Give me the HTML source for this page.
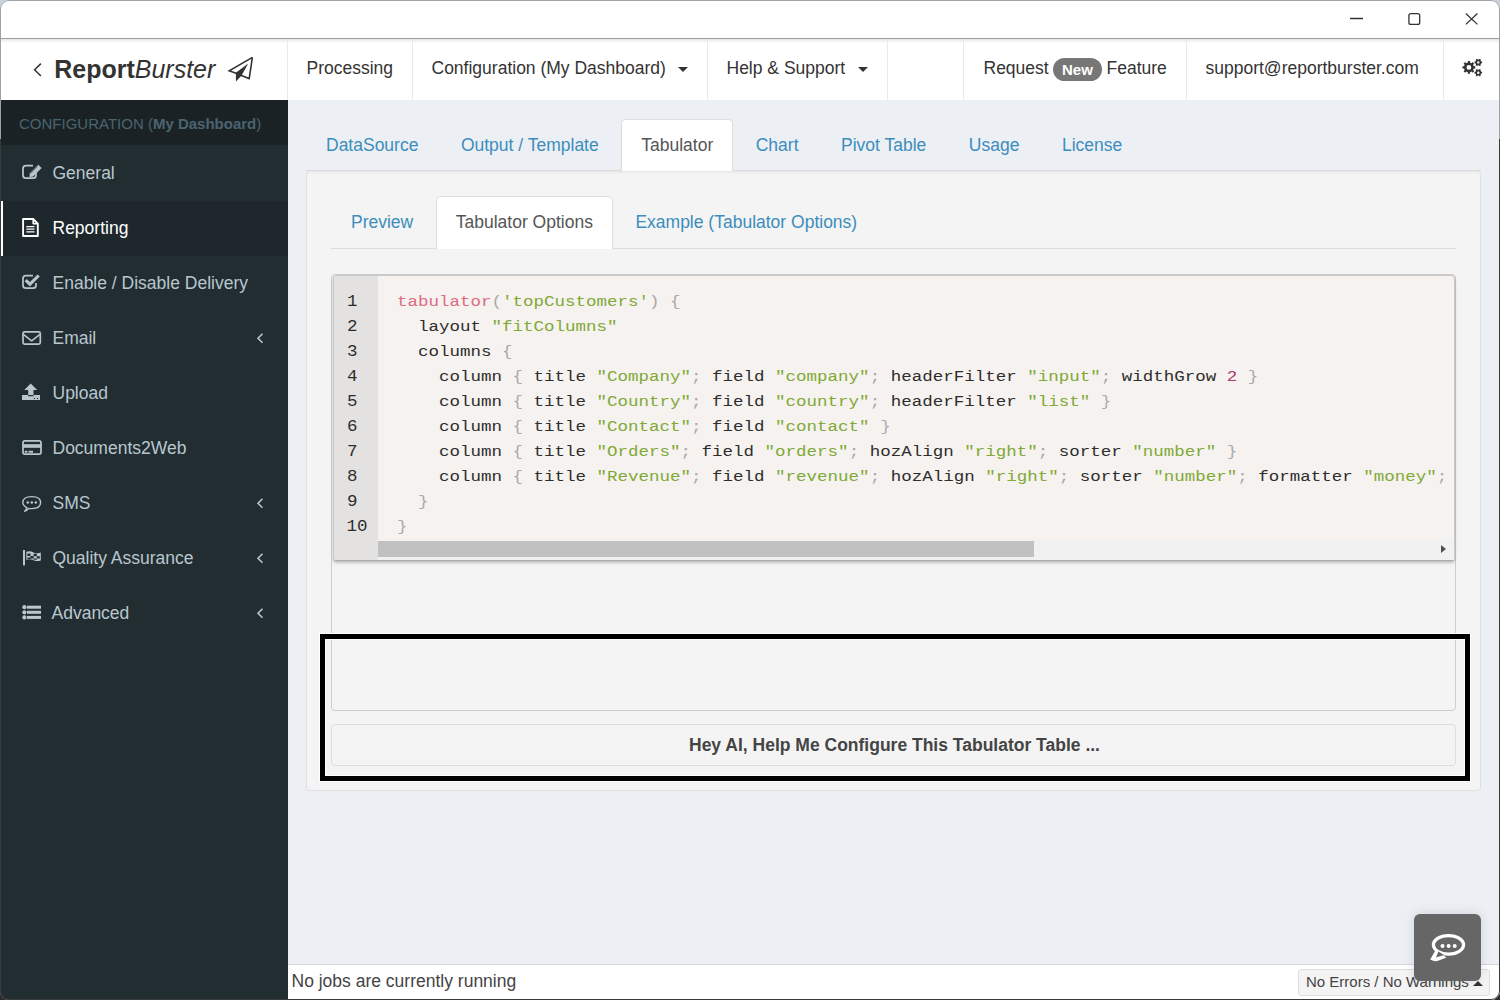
<!DOCTYPE html>
<html><head><meta charset="utf-8">
<style>
*{box-sizing:border-box;margin:0;padding:0}
html,body{width:1500px;height:1000px;overflow:hidden;background:linear-gradient(#c9d1da 0,#c9d1da 139px,#2c2c2c 139px)}
body{font-family:"Liberation Sans",sans-serif;position:relative}
.t{position:absolute;white-space:pre}
.b{position:absolute}
svg{position:absolute;overflow:visible}
</style></head><body>
<div class="b" style="left:0;top:0;width:1500px;height:1000px;border-radius:9px;background:#fff;overflow:hidden">
<div class="b" style="left:0;top:38px;width:1500px;height:1px;background:#9c9c9c"></div><div class="b" style="left:0;top:39px;width:1500px;height:4px;background:linear-gradient(#e6e6e6,#fff)"></div>
<svg style="left:0;top:0" width="1500" height="38"><g stroke="#333" stroke-width="1.3" fill="none"><line x1="1350" y1="18.5" x2="1363" y2="18.5"/><rect x="1408.9" y="13.6" width="10.8" height="10.8" rx="2"/><line x1="1465.8" y1="13.5" x2="1477.4" y2="24.4"/><line x1="1477.4" y1="13.5" x2="1465.8" y2="24.4"/></g></svg>
<div class="b" style="left:287px;top:39px;width:1px;height:61px;background:#eaeaea"></div><div class="b" style="left:412px;top:39px;width:1px;height:61px;background:#eaeaea"></div><div class="b" style="left:707px;top:39px;width:1px;height:61px;background:#eaeaea"></div><div class="b" style="left:887px;top:39px;width:1px;height:61px;background:#eaeaea"></div><div class="b" style="left:963px;top:39px;width:1px;height:61px;background:#eaeaea"></div><div class="b" style="left:1186px;top:39px;width:1px;height:61px;background:#eaeaea"></div><div class="b" style="left:1443px;top:39px;width:1px;height:61px;background:#eaeaea"></div>
<svg style="left:0;top:0" width="300" height="100"><path d="M40.9 63.6 L34.6 69.8 L40.9 76" stroke="#333" stroke-width="1.5" fill="none"/></svg>
<div class="t" style="left:54.2px;top:53.94px;font-size:25px;line-height:30px;color:#333;font-weight:normal;font-style:normal;font-family:'Liberation Sans',sans-serif;"><b>Report</b><i>Burster</i></div>
<svg style="left:0;top:0" width="300" height="100"><g fill="none" stroke="#333" stroke-width="1.6" stroke-linejoin="miter"><path d="M252.4 57.4 L229.2 70.8 L236.8 73.6"/><path d="M240.8 75.2 L249.2 78.6 L252.4 57.4"/></g><path d="M235.8 72.8 L248.2 63.6 L241.6 75.6 L236 81.6 Z" fill="#333"/></svg>
<div class="t" style="left:306.5px;top:56.44px;font-size:17.5px;line-height:25px;color:#333;font-weight:normal;font-style:normal;font-family:'Liberation Sans',sans-serif;">Processing</div>
<div class="t" style="left:431.5px;top:56.44px;font-size:17.5px;line-height:25px;color:#333;font-weight:normal;font-style:normal;font-family:'Liberation Sans',sans-serif;">Configuration (My Dashboard)</div>
<div class="b" style="left:678px;top:67px;width:0;height:0;border-left:5px solid transparent;border-right:5px solid transparent;border-top:5px solid #333"></div><div class="t" style="left:726.5px;top:56.44px;font-size:17.5px;line-height:25px;color:#333;font-weight:normal;font-style:normal;font-family:'Liberation Sans',sans-serif;">Help &amp; Support</div>
<div class="b" style="left:858px;top:67px;width:0;height:0;border-left:5px solid transparent;border-right:5px solid transparent;border-top:5px solid #333"></div><div class="t" style="left:983.5px;top:56.44px;font-size:17.5px;line-height:25px;color:#333;font-weight:normal;font-style:normal;font-family:'Liberation Sans',sans-serif;">Request</div>
<div class="b" style="left:1053px;top:58px;width:49px;height:23px;border-radius:12px;background:#777"></div><div class="t" style="left:1062px;top:59.60px;font-size:15px;line-height:20px;color:#fff;font-weight:bold;font-style:normal;font-family:'Liberation Sans',sans-serif;">New</div>
<div class="t" style="left:1106.5px;top:56.44px;font-size:17.5px;line-height:25px;color:#333;font-weight:normal;font-style:normal;font-family:'Liberation Sans',sans-serif;">Feature</div>
<div class="t" style="left:1205.5px;top:56.44px;font-size:17.5px;line-height:25px;color:#333;font-weight:normal;font-style:normal;font-family:'Liberation Sans',sans-serif;">support@reportburster.com</div>
<div class="b" style="left:0;top:100px;width:288px;height:900px;background:#222d32"></div><div class="b" style="left:0;top:100px;width:288px;height:45.4px;background:#1a2226"></div><div class="b" style="left:0;top:200.6px;width:288px;height:55.4px;background:#1e282c"></div><div class="b" style="left:1px;top:201px;width:2.2px;height:55px;background:#fff"></div>
<div class="t" style="left:19px;top:113.60px;font-size:15px;line-height:20px;color:#4b646f;font-weight:normal;font-style:normal;font-family:'Liberation Sans',sans-serif;">CONFIGURATION (<b>My Dashboard</b>)</div>
<div class="t" style="left:52.5px;top:161.34px;font-size:17.5px;line-height:25px;color:#b8c7ce;font-weight:normal;font-style:normal;font-family:'Liberation Sans',sans-serif;">General</div>
<div class="t" style="left:52.5px;top:216.34px;font-size:17.5px;line-height:25px;color:#fff;font-weight:normal;font-style:normal;font-family:'Liberation Sans',sans-serif;">Reporting</div>
<div class="t" style="left:52.5px;top:271.34px;font-size:17.5px;line-height:25px;color:#b8c7ce;font-weight:normal;font-style:normal;font-family:'Liberation Sans',sans-serif;">Enable / Disable Delivery</div>
<div class="t" style="left:52.5px;top:326.34px;font-size:17.5px;line-height:25px;color:#b8c7ce;font-weight:normal;font-style:normal;font-family:'Liberation Sans',sans-serif;">Email</div>
<svg style="left:0;top:0" width="288" height="1000"><path d="M262.5 333.79999999999995 L258 338.29999999999995 L262.5 342.79999999999995" stroke="#b8c7ce" stroke-width="1.6" fill="none"/></svg><div class="t" style="left:52.5px;top:381.34px;font-size:17.5px;line-height:25px;color:#b8c7ce;font-weight:normal;font-style:normal;font-family:'Liberation Sans',sans-serif;">Upload</div>
<div class="t" style="left:52.5px;top:436.34px;font-size:17.5px;line-height:25px;color:#b8c7ce;font-weight:normal;font-style:normal;font-family:'Liberation Sans',sans-serif;">Documents2Web</div>
<div class="t" style="left:52.5px;top:491.34px;font-size:17.5px;line-height:25px;color:#b8c7ce;font-weight:normal;font-style:normal;font-family:'Liberation Sans',sans-serif;">SMS</div>
<svg style="left:0;top:0" width="288" height="1000"><path d="M262.5 498.79999999999995 L258 503.29999999999995 L262.5 507.79999999999995" stroke="#b8c7ce" stroke-width="1.6" fill="none"/></svg><div class="t" style="left:52.5px;top:546.34px;font-size:17.5px;line-height:25px;color:#b8c7ce;font-weight:normal;font-style:normal;font-family:'Liberation Sans',sans-serif;">Quality Assurance</div>
<svg style="left:0;top:0" width="288" height="1000"><path d="M262.5 553.8 L258 558.3 L262.5 562.8" stroke="#b8c7ce" stroke-width="1.6" fill="none"/></svg><div class="t" style="left:51.5px;top:601.34px;font-size:17.5px;line-height:25px;color:#b8c7ce;font-weight:normal;font-style:normal;font-family:'Liberation Sans',sans-serif;">Advanced</div>
<svg style="left:0;top:0" width="288" height="1000"><path d="M262.5 608.8 L258 613.3 L262.5 617.8" stroke="#b8c7ce" stroke-width="1.6" fill="none"/></svg><svg style="left:0;top:0" width="290" height="700"><g fill="none" stroke="#b8c7ce" stroke-width="1.7" stroke-linecap="butt" stroke-linejoin="round"><path d="M33 165.6 H26 Q23 165.6 23 168.6 V175.2 Q23 178.2 26 178.2 H33 Q36 178.2 36 175.2 V172.5"/><path d="M33 275.6 H26 Q23 275.6 23 278.6 V285.2 Q23 288.2 26 288.2 H33 Q36 288.2 36 285.2 V283"/><rect x="23" y="331.8" width="17.3" height="12.4" rx="1.6"/><path d="M23.3 334.3 L31.6 340.8 L40 334.3" stroke-width="1.6"/><path d="M23.1 219 H33.2 L37.8 223.6 V236 H23.1 Z" stroke="#fff" stroke-width="1.9"/><path d="M33.2 219 V223.6 H37.8" stroke="#fff" stroke-width="1.6"/><path d="M26.3 226.6 H34.5 M26.3 229.2 H34.5 M26.3 231.8 H34.5" stroke="#fff" stroke-width="1.3"/><rect x="23" y="440.8" width="18" height="13.3" rx="1.8"/><path d="M24.6 511.2 Q26.5 509.6 26.8 507.6 Q22.8 505.6 22.8 502.6 Q22.8 496.6 31.8 496.6 Q40.6 496.6 40.6 502.6 Q40.6 508.6 31.8 508.6 Q30.2 508.6 28.8 508.4 Q27 510.6 24.6 511.2 Z" stroke-width="1.4"/></g><g fill="#b8c7ce"><path d="M29.4 177.2 L29.9 173.2 L38.3 164.8 L41.6 168.1 L33.2 176.5 Z"/><path d="M30.6 173.6 L37.8 166.4" stroke="#222d32" stroke-width="0.5"/><path d="M24.6 281.2 L26.8 279.0 L29.9 282.1 L37.6 274.4 L39.8 276.6 L29.9 286.5 Z"/><path d="M30.7 383.5 L37.2 389.9 H33.5 V395 H28.2 V389.9 H24.3 Z"/><path d="M22 395 H28.2 V396.3 H33.5 V395 H40 V400 H22 Z"/><circle cx="34.4" cy="398.4" r="0.6" fill="#222d32"/><circle cx="37.5" cy="398.4" r="0.6" fill="#222d32"/><rect x="23" y="444.2" width="18" height="3.6"/><rect x="24.8" y="450.8" width="2.6" height="1.9"/><rect x="28.6" y="450.8" width="4.4" height="1.9"/><circle cx="27.8" cy="502.4" r="1.25"/><circle cx="31.8" cy="502.4" r="1.25"/><circle cx="35.8" cy="502.4" r="1.25"/><rect x="23" y="550" width="2" height="15.3"/><path d="M26.3 551.8 Q30 550.6 33.6 552.4 Q37.2 554 40.8 552.6 V560.4 Q37.2 561.8 33.6 560.2 Q30 558.6 26.3 559.8 Z"/><path d="M27.4 553.6 H30.4 V556 H27.4 Z M30.4 556 H33.6 V558.4 H30.4 Z M33.6 553.8 H36.8 V556.2 H33.6 Z M36.8 556.2 H39.8 V558.6 H36.8 Z M27.4 557.6 H30.4 V558.9 H27.4 Z M33.6 558.4 H36.8 V559.8 H33.6 Z" fill="#222d32"/><circle cx="24.4" cy="607.2" r="2.1"/><rect x="27" y="605.7" width="14" height="3"/><circle cx="24.4" cy="612.3" r="2.1"/><rect x="27" y="610.8" width="14" height="3"/><circle cx="24.4" cy="617.4" r="2.1"/><rect x="27" y="615.9" width="14" height="3"/></g></svg>
<svg style="left:0;top:0" width="1500" height="100"><path fill="#333" fill-rule="evenodd" d="M1473.78 66.33 L1475.31 66.31 L1475.31 68.49 L1473.78 68.47 L1473.11 70.10 L1474.20 71.16 L1472.66 72.70 L1471.60 71.61 L1469.97 72.28 L1469.99 73.81 L1467.81 73.81 L1467.83 72.28 L1466.20 71.61 L1465.14 72.70 L1463.60 71.16 L1464.69 70.10 L1464.02 68.47 L1462.49 68.49 L1462.49 66.31 L1464.02 66.33 L1464.69 64.70 L1463.60 63.64 L1465.14 62.10 L1466.20 63.19 L1467.83 62.52 L1467.81 60.99 L1469.99 60.99 L1469.97 62.52 L1471.60 63.19 L1472.66 62.10 L1474.20 63.64 L1473.11 64.70 Z M1471.30 67.40 A2.4 2.4 0 1 0 1466.50 67.40 A2.4 2.4 0 1 0 1471.30 67.40 Z"/><path fill="#333" fill-rule="evenodd" d="M1481.18 61.55 L1482.10 61.53 L1482.10 63.27 L1481.18 63.25 L1480.48 64.47 L1480.95 65.26 L1479.45 66.13 L1479.00 65.32 L1477.60 65.32 L1477.15 66.13 L1475.65 65.26 L1476.12 64.47 L1475.42 63.25 L1474.50 63.27 L1474.50 61.53 L1475.42 61.55 L1476.12 60.33 L1475.65 59.54 L1477.15 58.67 L1477.60 59.48 L1479.00 59.48 L1479.45 58.67 L1480.95 59.54 L1480.48 60.33 Z M1479.50 62.40 A1.2 1.2 0 1 0 1477.10 62.40 A1.2 1.2 0 1 0 1479.50 62.40 Z"/><path fill="#333" fill-rule="evenodd" d="M1481.18 71.85 L1482.10 71.83 L1482.10 73.57 L1481.18 73.55 L1480.48 74.77 L1480.95 75.56 L1479.45 76.43 L1479.00 75.62 L1477.60 75.62 L1477.15 76.43 L1475.65 75.56 L1476.12 74.77 L1475.42 73.55 L1474.50 73.57 L1474.50 71.83 L1475.42 71.85 L1476.12 70.63 L1475.65 69.84 L1477.15 68.97 L1477.60 69.78 L1479.00 69.78 L1479.45 68.97 L1480.95 69.84 L1480.48 70.63 Z M1479.50 72.70 A1.2 1.2 0 1 0 1477.10 72.70 A1.2 1.2 0 1 0 1479.50 72.70 Z"/></svg>
<div class="b" style="left:288px;top:100px;width:1212px;height:864px;background:#ecf0f5"></div>
<div class="b" style="left:288px;top:964px;width:1212px;height:1px;background:#d2d6de"></div><div class="b" style="left:288px;top:965px;width:1212px;height:35px;background:#fff"></div><div class="t" style="left:291.5px;top:968.64px;font-size:17.5px;line-height:25px;color:#444;font-weight:normal;font-style:normal;font-family:'Liberation Sans',sans-serif;">No jobs are currently running</div>
<div class="b" style="left:1298px;top:969px;width:192px;height:27px;border:1px solid #ddd;border-radius:3px;background:#f4f4f4"></div><div class="t" style="left:1306px;top:972.10px;font-size:15px;line-height:20px;color:#444;font-weight:normal;font-style:normal;font-family:'Liberation Sans',sans-serif;">No Errors / No Warnings</div>
<div class="b" style="left:1473px;top:981px;width:0;height:0;border-left:5px solid transparent;border-right:5px solid transparent;border-bottom:5px solid #333"></div>
<div class="b" style="left:306px;top:171px;width:1175px;height:620px;background:#f4f4f4;border:1px solid #e0e0e0;border-top:0;border-radius:4px;box-shadow:inset 0 3px 3px -2px rgba(0,0,0,.07)"></div>
<div class="b" style="left:306px;top:170px;width:1175px;height:1px;background:#d9d9d9"></div>
<div class="t" style="left:326.0px;top:132.64px;font-size:17.5px;line-height:25px;color:#3c8dbc;font-weight:normal;font-style:normal;font-family:'Liberation Sans',sans-serif;">DataSource</div>
<div class="t" style="left:460.92px;top:132.64px;font-size:17.5px;line-height:25px;color:#3c8dbc;font-weight:normal;font-style:normal;font-family:'Liberation Sans',sans-serif;">Output / Template</div>
<div class="b" style="left:621.23px;top:119.3px;width:112.00px;height:52px;background:#fff;border:1px solid #ddd;border-bottom:0;border-radius:5px 5px 0 0"></div><div class="t" style="left:641.23px;top:132.64px;font-size:17.5px;line-height:25px;color:#555;font-weight:normal;font-style:normal;font-family:'Liberation Sans',sans-serif;">Tabulator</div>
<div class="t" style="left:755.73px;top:132.64px;font-size:17.5px;line-height:25px;color:#3c8dbc;font-weight:normal;font-style:normal;font-family:'Liberation Sans',sans-serif;">Chart</div>
<div class="t" style="left:841.03px;top:132.64px;font-size:17.5px;line-height:25px;color:#3c8dbc;font-weight:normal;font-style:normal;font-family:'Liberation Sans',sans-serif;">Pivot Table</div>
<div class="t" style="left:968.8299999999999px;top:132.64px;font-size:17.5px;line-height:25px;color:#3c8dbc;font-weight:normal;font-style:normal;font-family:'Liberation Sans',sans-serif;">Usage</div>
<div class="t" style="left:1061.9199999999998px;top:132.64px;font-size:17.5px;line-height:25px;color:#3c8dbc;font-weight:normal;font-style:normal;font-family:'Liberation Sans',sans-serif;">License</div>

<div class="b" style="left:331px;top:248px;width:1125px;height:1px;background:#ddd"></div><div class="t" style="left:351.0px;top:210.44px;font-size:17.5px;line-height:25px;color:#3c8dbc;font-weight:normal;font-style:normal;font-family:'Liberation Sans',sans-serif;">Preview</div>
<div class="b" style="left:435.75px;top:196px;width:177.17px;height:53px;background:#fff;border:1px solid #ddd;border-bottom:0;border-radius:5px 5px 0 0"></div><div class="t" style="left:455.75px;top:210.44px;font-size:17.5px;line-height:25px;color:#555;font-weight:normal;font-style:normal;font-family:'Liberation Sans',sans-serif;">Tabulator Options</div>
<div class="t" style="left:635.42px;top:210.44px;font-size:17.5px;line-height:25px;color:#3c8dbc;font-weight:normal;font-style:normal;font-family:'Liberation Sans',sans-serif;">Example (Tabulator Options)</div>

<div class="b" style="left:331px;top:274px;width:1125px;height:437px;border:1px solid #ccc;border-radius:4px;background:#f4f4f4"></div><div class="b" style="left:333px;top:275px;width:1122px;height:286px;background:#f5f2f0;border-radius:4px;border:1px solid #c9c9c9;border-bottom-color:#a9a9a9;box-shadow:0 2px 3px rgba(0,0,0,.22)"></div><div class="b" style="left:334px;top:276px;width:44px;height:284px;background:#e4e2e0;border-radius:3px 0 0 3px"></div><div class="b" style="left:378px;top:539px;width:1076px;height:21px;background:#f1f1f1"></div><div class="b" style="left:378px;top:541px;width:656px;height:16px;background:#c1c1c1"></div><div class="b" style="left:1441px;top:545px;width:0;height:0;border-top:4.5px solid transparent;border-bottom:4.5px solid transparent;border-left:5px solid #505050"></div>
<div class="t" style="left:347px;top:288.84px;font-size:17.5px;line-height:25px;color:#2e2d2d;font-weight:normal;font-style:normal;font-family:'Liberation Mono',monospace;transform:scaleY(0.9);transform-origin:0 17.163749999999993px;">1</div>
<div class="t" style="left:397px;top:288.84px;font-size:17.5px;line-height:25px;color:#2e2d2d;font-weight:normal;font-style:normal;font-family:'Liberation Mono',monospace;transform:scaleY(0.86);transform-origin:0 17.163749999999993px;"><span style="color:#e06a82">tabulator</span><span style="color:#a9a9a9">(</span><span style="color:#80a936">&#x27;topCustomers&#x27;</span><span style="color:#a9a9a9">)</span><span style="color:#2e2d2d"> </span><span style="color:#a9a9a9">{</span></div>
<div class="t" style="left:347px;top:313.84px;font-size:17.5px;line-height:25px;color:#2e2d2d;font-weight:normal;font-style:normal;font-family:'Liberation Mono',monospace;transform:scaleY(0.9);transform-origin:0 17.163749999999993px;">2</div>
<div class="t" style="left:397px;top:313.84px;font-size:17.5px;line-height:25px;color:#2e2d2d;font-weight:normal;font-style:normal;font-family:'Liberation Mono',monospace;transform:scaleY(0.86);transform-origin:0 17.163749999999993px;"><span style="color:#2e2d2d">  layout </span><span style="color:#80a936">&quot;fitColumns&quot;</span></div>
<div class="t" style="left:347px;top:338.84px;font-size:17.5px;line-height:25px;color:#2e2d2d;font-weight:normal;font-style:normal;font-family:'Liberation Mono',monospace;transform:scaleY(0.9);transform-origin:0 17.163749999999993px;">3</div>
<div class="t" style="left:397px;top:338.84px;font-size:17.5px;line-height:25px;color:#2e2d2d;font-weight:normal;font-style:normal;font-family:'Liberation Mono',monospace;transform:scaleY(0.86);transform-origin:0 17.163749999999993px;"><span style="color:#2e2d2d">  columns </span><span style="color:#a9a9a9">{</span></div>
<div class="t" style="left:347px;top:363.84px;font-size:17.5px;line-height:25px;color:#2e2d2d;font-weight:normal;font-style:normal;font-family:'Liberation Mono',monospace;transform:scaleY(0.9);transform-origin:0 17.163749999999993px;">4</div>
<div class="t" style="left:397px;top:363.84px;font-size:17.5px;line-height:25px;color:#2e2d2d;font-weight:normal;font-style:normal;font-family:'Liberation Mono',monospace;transform:scaleY(0.86);transform-origin:0 17.163749999999993px;"><span style="color:#2e2d2d">    column </span><span style="color:#a9a9a9">{</span><span style="color:#2e2d2d"> title </span><span style="color:#80a936">&quot;Company&quot;</span><span style="color:#a9a9a9">;</span><span style="color:#2e2d2d"> field </span><span style="color:#80a936">&quot;company&quot;</span><span style="color:#a9a9a9">;</span><span style="color:#2e2d2d"> headerFilter </span><span style="color:#80a936">&quot;input&quot;</span><span style="color:#a9a9a9">;</span><span style="color:#2e2d2d"> widthGrow </span><span style="color:#a83574">2</span><span style="color:#2e2d2d"> </span><span style="color:#a9a9a9">}</span></div>
<div class="t" style="left:347px;top:388.84px;font-size:17.5px;line-height:25px;color:#2e2d2d;font-weight:normal;font-style:normal;font-family:'Liberation Mono',monospace;transform:scaleY(0.9);transform-origin:0 17.163749999999993px;">5</div>
<div class="t" style="left:397px;top:388.84px;font-size:17.5px;line-height:25px;color:#2e2d2d;font-weight:normal;font-style:normal;font-family:'Liberation Mono',monospace;transform:scaleY(0.86);transform-origin:0 17.163749999999993px;"><span style="color:#2e2d2d">    column </span><span style="color:#a9a9a9">{</span><span style="color:#2e2d2d"> title </span><span style="color:#80a936">&quot;Country&quot;</span><span style="color:#a9a9a9">;</span><span style="color:#2e2d2d"> field </span><span style="color:#80a936">&quot;country&quot;</span><span style="color:#a9a9a9">;</span><span style="color:#2e2d2d"> headerFilter </span><span style="color:#80a936">&quot;list&quot;</span><span style="color:#2e2d2d"> </span><span style="color:#a9a9a9">}</span></div>
<div class="t" style="left:347px;top:413.84px;font-size:17.5px;line-height:25px;color:#2e2d2d;font-weight:normal;font-style:normal;font-family:'Liberation Mono',monospace;transform:scaleY(0.9);transform-origin:0 17.163749999999993px;">6</div>
<div class="t" style="left:397px;top:413.84px;font-size:17.5px;line-height:25px;color:#2e2d2d;font-weight:normal;font-style:normal;font-family:'Liberation Mono',monospace;transform:scaleY(0.86);transform-origin:0 17.163749999999993px;"><span style="color:#2e2d2d">    column </span><span style="color:#a9a9a9">{</span><span style="color:#2e2d2d"> title </span><span style="color:#80a936">&quot;Contact&quot;</span><span style="color:#a9a9a9">;</span><span style="color:#2e2d2d"> field </span><span style="color:#80a936">&quot;contact&quot;</span><span style="color:#2e2d2d"> </span><span style="color:#a9a9a9">}</span></div>
<div class="t" style="left:347px;top:438.84px;font-size:17.5px;line-height:25px;color:#2e2d2d;font-weight:normal;font-style:normal;font-family:'Liberation Mono',monospace;transform:scaleY(0.9);transform-origin:0 17.163749999999993px;">7</div>
<div class="t" style="left:397px;top:438.84px;font-size:17.5px;line-height:25px;color:#2e2d2d;font-weight:normal;font-style:normal;font-family:'Liberation Mono',monospace;transform:scaleY(0.86);transform-origin:0 17.163749999999993px;"><span style="color:#2e2d2d">    column </span><span style="color:#a9a9a9">{</span><span style="color:#2e2d2d"> title </span><span style="color:#80a936">&quot;Orders&quot;</span><span style="color:#a9a9a9">;</span><span style="color:#2e2d2d"> field </span><span style="color:#80a936">&quot;orders&quot;</span><span style="color:#a9a9a9">;</span><span style="color:#2e2d2d"> hozAlign </span><span style="color:#80a936">&quot;right&quot;</span><span style="color:#a9a9a9">;</span><span style="color:#2e2d2d"> sorter </span><span style="color:#80a936">&quot;number&quot;</span><span style="color:#2e2d2d"> </span><span style="color:#a9a9a9">}</span></div>
<div class="t" style="left:347px;top:463.84px;font-size:17.5px;line-height:25px;color:#2e2d2d;font-weight:normal;font-style:normal;font-family:'Liberation Mono',monospace;transform:scaleY(0.9);transform-origin:0 17.163749999999993px;">8</div>
<div class="t" style="left:397px;top:463.84px;font-size:17.5px;line-height:25px;color:#2e2d2d;font-weight:normal;font-style:normal;font-family:'Liberation Mono',monospace;transform:scaleY(0.86);transform-origin:0 17.163749999999993px;"><span style="color:#2e2d2d">    column </span><span style="color:#a9a9a9">{</span><span style="color:#2e2d2d"> title </span><span style="color:#80a936">&quot;Revenue&quot;</span><span style="color:#a9a9a9">;</span><span style="color:#2e2d2d"> field </span><span style="color:#80a936">&quot;revenue&quot;</span><span style="color:#a9a9a9">;</span><span style="color:#2e2d2d"> hozAlign </span><span style="color:#80a936">&quot;right&quot;</span><span style="color:#a9a9a9">;</span><span style="color:#2e2d2d"> sorter </span><span style="color:#80a936">&quot;number&quot;</span><span style="color:#a9a9a9">;</span><span style="color:#2e2d2d"> formatter </span><span style="color:#80a936">&quot;money&quot;</span><span style="color:#a9a9a9">;</span></div>
<div class="t" style="left:347px;top:488.84px;font-size:17.5px;line-height:25px;color:#2e2d2d;font-weight:normal;font-style:normal;font-family:'Liberation Mono',monospace;transform:scaleY(0.9);transform-origin:0 17.163749999999993px;">9</div>
<div class="t" style="left:397px;top:488.84px;font-size:17.5px;line-height:25px;color:#2e2d2d;font-weight:normal;font-style:normal;font-family:'Liberation Mono',monospace;transform:scaleY(0.86);transform-origin:0 17.163749999999993px;"><span style="color:#2e2d2d">  </span><span style="color:#a9a9a9">}</span></div>
<div class="t" style="left:346.5px;top:513.84px;font-size:17.5px;line-height:25px;color:#2e2d2d;font-weight:normal;font-style:normal;font-family:'Liberation Mono',monospace;transform:scaleY(0.9);transform-origin:0 17.16375000000005px;">10</div>
<div class="t" style="left:397px;top:513.84px;font-size:17.5px;line-height:25px;color:#2e2d2d;font-weight:normal;font-style:normal;font-family:'Liberation Mono',monospace;transform:scaleY(0.86);transform-origin:0 17.16375000000005px;"><span style="color:#a9a9a9">}</span></div>

<div class="b" style="left:331px;top:724px;width:1125px;height:42px;border:1px solid #ddd;border-radius:4px;background:#f4f4f4"></div><div class="t" style="left:689px;top:733.24px;font-size:17.5px;line-height:25px;color:#444;font-weight:bold;font-style:normal;font-family:'Liberation Sans',sans-serif;">Hey AI, Help Me Configure This Tabulator Table ...</div>
<div class="b" style="left:319px;top:633px;width:1152px;height:149px;border:1px solid #fff"></div><div class="b" style="left:320px;top:634px;width:1150px;height:147px;border:5px solid #000"></div><div class="b" style="left:325px;top:639px;width:1140px;height:137px;border:1px solid #fff"></div>
<div class="b" style="left:1414px;top:914px;width:67px;height:67px;border-radius:6px;background:#666;box-shadow:0 0 12px rgba(0,0,0,.12)"></div><svg style="left:0;top:0" width="1500" height="1000"><ellipse cx="1448.5" cy="944.8" rx="16.7" ry="10.9" fill="#fff"/><path fill="#fff" d="M1435.6 950 L1430.2 959.6 Q1434 961.6 1437.4 961 L1446.5 957.4 Z"/><ellipse cx="1448.5" cy="944.8" rx="13.4" ry="7.6" fill="#666"/><path fill="#666" d="M1438.4 951.4 L1436 957.6 L1444 955 Z"/><g fill="#fff"><circle cx="1442.5" cy="946" r="2"/><circle cx="1448.6" cy="946" r="2"/><circle cx="1454.7" cy="946" r="2"/></g></svg>
</div>
<div class="b" style="left:0;top:0;width:1500px;height:1000px;border-radius:9px;border:1px solid #9da2a8;clip-path:inset(0 0 861px 0)"></div>
<div class="b" style="left:0;top:0;width:1500px;height:1000px;border-radius:9px;border:1px solid #3a3a3a;clip-path:inset(139px 0 0 0)"></div>
</body></html>
